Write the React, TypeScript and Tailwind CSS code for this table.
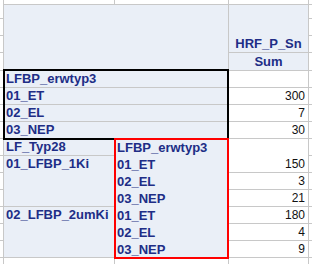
const label = 'font-bold text-[13px] leading-[16px] text-[#202d86] pl-[2px] whitespace-nowrap';
const num = 'text-[12px] leading-[16px] text-[#111111] text-right pr-[3px]';

function SideCells() {
  return (
    <>
      {/* left sliver, col 1 */}
      <div className="col-start-1 row-start-1 border-r border-[#c8c8c8]" />
      <div className="col-start-1 row-start-2 border-r border-b border-[#c8c8c8]" />
      <div className="col-start-1 row-start-3 border-r border-b border-[#c8c8c8]" />
      <div className="col-start-1 row-start-4 border-r border-b border-[#c8c8c8]" />
      <div className="col-start-1 row-start-5 border-r border-b border-[#c8c8c8]" />
      <div className="col-start-1 row-start-6 border-r border-b border-[#c8c8c8]" />
      <div className="col-start-1 row-start-7 border-r border-b border-[#c8c8c8]" />
      <div className="col-start-1 row-start-8 border-r border-b border-[#c8c8c8]" />
      <div className="col-start-1 row-start-9 border-r border-b border-[#c8c8c8]" />
      <div className="col-start-1 row-start-10 border-r border-b border-[#c8c8c8]" />
      <div className="col-start-1 row-start-11 border-r border-b border-[#c8c8c8]" />
      <div className="col-start-1 row-start-12 border-r border-b border-[#c8c8c8]" />
      <div className="col-start-1 row-start-13 border-r border-b border-[#c8c8c8]" />
      <div className="col-start-1 row-start-14 border-r border-b border-[#c8c8c8]" />
      <div className="col-start-1 row-start-15 border-r border-b border-[#c8c8c8]" />
      <div className="col-start-1 row-start-16 border-r border-b border-[#c8c8c8]" />
      <div className="col-start-1 row-start-17 border-r border-[#c8c8c8]" />

      {/* right sliver, col 5 */}
      <div className="col-start-5 row-start-1 border-b border-[#c8c8c8]" />
      <div className="col-start-5 row-start-2 border-b border-[#c8c8c8]" />
      <div className="col-start-5 row-start-3 border-b border-[#c8c8c8]" />
      <div className="col-start-5 row-start-4 border-b border-[#c8c8c8]" />
      <div className="col-start-5 row-start-5 border-b border-[#c8c8c8]" />
      <div className="col-start-5 row-start-6 border-b border-[#c8c8c8]" />
      <div className="col-start-5 row-start-7 border-b border-[#c8c8c8]" />
      <div className="col-start-5 row-start-8 border-b border-[#c8c8c8]" />
      <div className="col-start-5 row-start-9 border-b border-[#c8c8c8]" />
      <div className="col-start-5 row-start-10 border-b border-[#c8c8c8]" />
      <div className="col-start-5 row-start-11 border-b border-[#c8c8c8]" />
      <div className="col-start-5 row-start-12 border-b border-[#c8c8c8]" />
      <div className="col-start-5 row-start-13 border-b border-[#c8c8c8]" />
      <div className="col-start-5 row-start-14 border-b border-[#c8c8c8]" />
      <div className="col-start-5 row-start-15 border-b border-[#c8c8c8]" />
      <div className="col-start-5 row-start-16 border-b border-[#c8c8c8]" />
    </>
  );
}

export default function App() {
  return (
    <div
      className="w-[312px] h-[264px] bg-white overflow-hidden grid grid-cols-[4px_111px_114px_80px_3px] grid-rows-[5px_14px_17px_17px_18px_repeat(11,17px)_6px]"
      style={{ fontFamily: '"Liberation Sans", Arial, sans-serif' }}
    >
      <SideCells />

      {/* strip above the pivot */}
      <div className="col-start-2 row-start-1 border-r border-b border-[#c8c8c8]" />
      <div className="col-start-3 row-start-1 border-r border-b border-[#c8c8c8]" />
      <div className="col-start-4 row-start-1 border-r border-b border-[#c8c8c8]" />

      {/* header */}
      <div className="col-start-2 col-span-2 row-start-2 row-span-4 bg-[#eaeff7] border-r border-b border-[#c8c8c8]" />
      <div className="col-start-4 row-start-2 row-span-3 bg-[#eaeff7] border-r border-b border-[#c8c8c8] flex flex-col justify-end items-center">
        <span className="font-bold text-[13px] leading-[16px] text-[#202d86]">HRF_P_Sn</span>
      </div>
      <div className="col-start-4 row-start-5 bg-[#eaeff7] border-r border-b border-[#c8c8c8] flex justify-center">
        <span className="font-bold text-[13px] leading-[17px] text-[#202d86]">Sum</span>
      </div>

      {/* first block */}
      <div className={`col-start-2 col-span-2 row-start-6 bg-[#eaeff7] border-r border-b border-[#c8c8c8] ${label}`}>LFBP_erwtyp3</div>
      <div className="col-start-4 row-start-6 border-r border-b border-[#c8c8c8]" />
      <div className={`col-start-2 col-span-2 row-start-7 bg-[#eaeff7] border-r border-b border-[#c8c8c8] ${label}`}>01_ET</div>
      <div className={`col-start-4 row-start-7 border-r border-b border-[#c8c8c8] ${num}`}>300</div>
      <div className={`col-start-2 col-span-2 row-start-8 bg-[#eaeff7] border-r border-b border-[#c8c8c8] ${label}`}>02_EL</div>
      <div className={`col-start-4 row-start-8 border-r border-b border-[#c8c8c8] ${num}`}>7</div>
      <div className={`col-start-2 col-span-2 row-start-9 bg-[#eaeff7] border-r border-b border-[#c8c8c8] ${label}`}>03_NEP</div>
      <div className={`col-start-4 row-start-9 border-r border-b border-[#c8c8c8] ${num}`}>30</div>

      {/* second block */}
      <div className={`col-start-2 row-start-10 bg-[#eaeff7] border-r border-b border-[#c8c8c8] ${label}`}>LF_Typ28</div>
      <div className={`col-start-2 row-start-11 row-span-3 bg-[#eaeff7] border-r border-b border-[#c8c8c8] ${label}`}>01_LFBP_1Ki</div>
      <div className={`col-start-2 row-start-14 row-span-3 bg-[#eaeff7] border-r border-b border-[#c8c8c8] ${label}`}>02_LFBP_2umKi</div>

      <div className="col-start-3 row-start-10 row-span-7 bg-[#eaeff7] border-r border-b border-[#c8c8c8] flex flex-col">
        {['LFBP_erwtyp3', '01_ET', '02_EL', '03_NEP', '01_ET', '02_EL', '03_NEP'].map((t, i) => (
          <div key={i} className={`h-[17px] leading-[17px] ${label}`}>
            {t}
          </div>
        ))}
      </div>

      <div className="col-start-4 row-start-10 border-r border-[#c8c8c8]" />
      <div className={`col-start-4 row-start-11 border-r border-b border-[#c8c8c8] ${num}`}>150</div>
      <div className={`col-start-4 row-start-12 border-r border-b border-[#c8c8c8] ${num}`}>3</div>
      <div className={`col-start-4 row-start-13 border-r border-b border-[#c8c8c8] ${num}`}>21</div>
      <div className={`col-start-4 row-start-14 border-r border-b border-[#c8c8c8] ${num}`}>180</div>
      <div className={`col-start-4 row-start-15 border-r border-b border-[#c8c8c8] ${num}`}>4</div>
      <div className={`col-start-4 row-start-16 border-r border-b border-[#c8c8c8] ${num}`}>9</div>

      {/* below the pivot */}
      <div className="col-start-2 row-start-17 border-r border-[#c8c8c8]" />
      <div className="col-start-3 row-start-17 border-r border-[#c8c8c8]" />
      <div className="col-start-4 row-start-17 border-r border-[#c8c8c8]" />

      {/* thick cell borders */}
      <div className="col-start-2 col-span-2 row-start-6 row-span-4 -mt-[2px] -mb-[1px] -ml-[1px] border-2 border-black pointer-events-none" />
      <div className="col-start-3 row-start-10 row-span-7 -mt-[1px] -mb-[1px] -ml-[1px] border-2 border-[#ff0000] pointer-events-none" />
    </div>
  );
}
